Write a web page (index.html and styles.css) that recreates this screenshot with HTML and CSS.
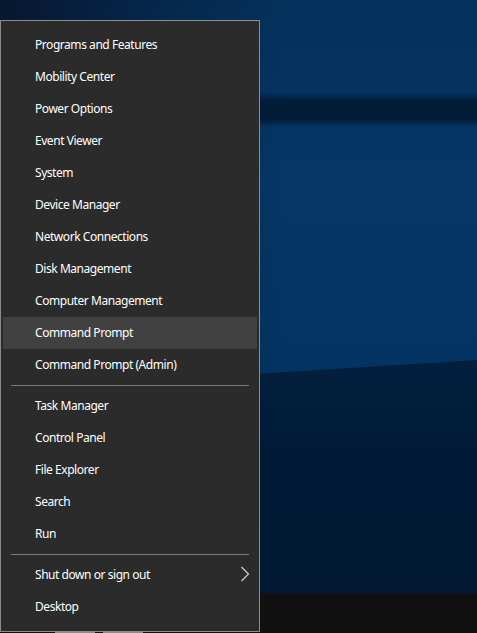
FILE: index.html
```html
<!DOCTYPE html>
<html lang="en">
  <head>
    <meta charset="UTF-8" />
    <meta name="viewport" content="width=device-width, initial-scale=1.0" />
    <title>Quick Link Menu</title>
    <link rel="stylesheet" href="styles.css">
  </head>
  <body>
    <div class="desktop">
      <div class="wallpaper">
        <div class="band"></div>
        <div class="lower"></div>
      </div>
      <div class="taskbar">
        <span class="running running-1"></span>
        <span class="running running-2"></span>
      </div>
    </div>

    <div class="menu">
      <div class="item">Programs and Features</div>
      <div class="item">Mobility Center</div>
      <div class="item">Power Options</div>
      <div class="item">Event Viewer</div>
      <div class="item">System</div>
      <div class="item">Device Manager</div>
      <div class="item">Network Connections</div>
      <div class="item">Disk Management</div>
      <div class="item">Computer Management</div>
      <div class="item item-hover">Command Prompt</div>
      <div class="item">Command Prompt (Admin)</div>
      <div class="separator"></div>
      <div class="item">Task Manager</div>
      <div class="item">Control Panel</div>
      <div class="item">File Explorer</div>
      <div class="item">Search</div>
      <div class="item">Run</div>
      <div class="separator"></div>
      <div class="item item-sub">
        Shut down or sign out
        <svg class="chevron" width="10" height="16" viewBox="0 0 10 16">
          <path d="M1.5 1 L8.5 8 L1.5 15" fill="none" stroke="#d0d0d0" stroke-width="1.2" />
        </svg>
      </div>
      <div class="item">Desktop</div>
    </div>
  </body>
</html>
```

FILE: styles.css
```css
html,
body {
  margin: 0;
  height: 100%;
  overflow: hidden;
}

body {
  font-family: "Noto Sans", "Open Sans", sans-serif;
  background: #111;
}

.desktop {
  display: flex;
  flex-direction: column;
  height: 100%;
}

.wallpaper {
  flex: 1;
  position: relative;
  overflow: hidden;
  background:
    linear-gradient(90deg, rgba(8, 18, 40, 0.85) 0%, rgba(8, 18, 40, 0.3) 35%, rgba(8, 18, 40, 0) 60%),
    linear-gradient(180deg, #04315c 0%, #053767 30%, #043463 60%, #032d57 100%);
}

.band {
  position: absolute;
  left: 0;
  right: 0;
  top: 92px;
  height: 36px;
  background: linear-gradient(180deg, rgba(2, 20, 42, 0) 0%, rgba(2, 22, 46, 0.8) 25%, rgba(2, 22, 46, 0.8) 75%, rgba(2, 20, 42, 0) 100%);
}

.lower {
  position: absolute;
  left: 0;
  right: 0;
  top: 360px;
  bottom: 0;
  background: linear-gradient(180deg, #021f3d 0%, #011b37 40%, #011932 100%);
  clip-path: polygon(0 30px, 100% 0, 100% 100%, 0 100%);
}

.taskbar {
  height: 40px;
  background: #101010;
  position: relative;
}

.running {
  position: absolute;
  bottom: 0;
  height: 2px;
  width: 40px;
  background: #8a8a8a;
}

.running-1 {
  left: 55px;
}

.running-2 {
  left: 103px;
}

.menu {
  position: absolute;
  left: 0;
  top: 20px;
  width: 258px;
  padding: 8px 0;
  background: #2b2b2b;
  border: 1px solid #8c8c8c;
  color: #fff;
  font-size: 12px;
  letter-spacing: -0.45px;
}

.item {
  height: 32px;
  margin: 0 2px;
  padding-left: 32px;
  padding-bottom: 2px;
  box-sizing: border-box;
  display: flex;
  align-items: center;
  position: relative;
}

.item-hover {
  background: #414141;
}

.chevron {
  position: absolute;
  right: 7px;
  top: 7px;
}

.separator {
  height: 1px;
  margin: 4px 10px;
  background: #7a7a7a;
}
```
